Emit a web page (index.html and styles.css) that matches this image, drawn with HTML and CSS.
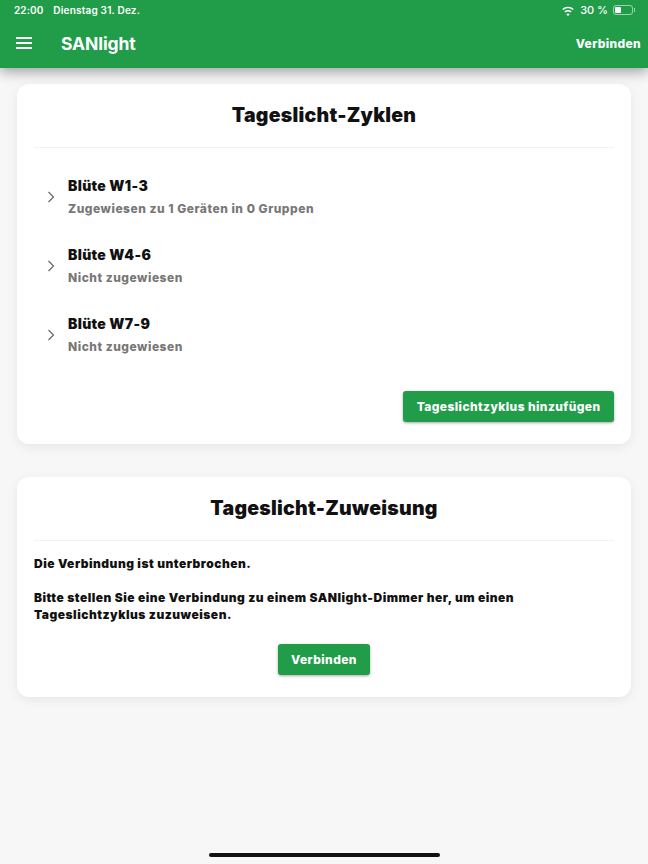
FILE: index.html
```html
<!DOCTYPE html>
<html lang="de">
<head>
<meta charset="utf-8">
<title>SANlight</title>
<link rel="stylesheet" href="styles.css">
</head>
<body>
<header class="appbar">
  <div class="status">
    <div class="status-left"><span class="time">22:00</span><span class="date">Dienstag 31. Dez.</span></div>
    <div class="status-right">
      <svg class="wifi" width="14" height="11" viewBox="0 0 14 11"><path d="M7 8.200 8.700 9.600 7 11 5.300 9.600Z M3.400 6.300C5.500 4.500 8.500 4.500 10.600 6.300L9.600 7.400C8 6.100 6 6.100 4.400 7.400Z M1.200 4C4.600 1 9.400 1 12.800 4L11.700 5.100C8.900 2.600 5.100 2.600 2.300 5.100Z" fill="#fff"/></svg>
      <span class="pct">30 %</span>
      <span class="battery"><span class="battery-fill"></span></span><span class="battery-tip"></span>
    </div>
  </div>
  <div class="toolbar">
    <button class="menu" aria-label="Menü"><span></span><span></span><span></span></button>
    <span class="brand">SANlight</span>
    <span class="connect">Verbinden</span>
  </div>
</header>
<main class="content">
  <section class="card">
    <h2 class="card-title">Tageslicht-Zyklen</h2>
    <ul class="cycles">
      <li class="cycle">
        <svg class="chev" width="8" height="12" viewBox="0 0 8 12"><path d="M1.500 1 6.500 6 1.500 11" fill="none" stroke="#666" stroke-width="1.200"/></svg>
        <div><div class="cycle-name">Blüte W1-3</div><div class="cycle-sub">Zugewiesen zu 1 Geräten in 0 Gruppen</div></div>
      </li>
      <li class="cycle">
        <svg class="chev" width="8" height="12" viewBox="0 0 8 12"><path d="M1.500 1 6.500 6 1.500 11" fill="none" stroke="#666" stroke-width="1.200"/></svg>
        <div><div class="cycle-name">Blüte W4-6</div><div class="cycle-sub">Nicht zugewiesen</div></div>
      </li>
      <li class="cycle">
        <svg class="chev" width="8" height="12" viewBox="0 0 8 12"><path d="M1.500 1 6.500 6 1.500 11" fill="none" stroke="#666" stroke-width="1.200"/></svg>
        <div><div class="cycle-name">Blüte W7-9</div><div class="cycle-sub">Nicht zugewiesen</div></div>
      </li>
    </ul>
    <div class="actions-end"><button class="btn">Tageslichtzyklus hinzufügen</button></div>
  </section>
  <section class="card card-assign">
    <h2 class="card-title">Tageslicht-Zuweisung</h2>
    <p class="msg msg-first">Die Verbindung ist unterbrochen.</p>
    <p class="msg msg-long">Bitte stellen Sie eine Verbindung zu einem SANlight-Dimmer her, um einen Tageslichtzyklus zuzuweisen.</p>
    <div class="actions-center"><button class="btn">Verbinden</button></div>
  </section>
</main>
<div class="home-indicator"></div>
</body>
</html>
```

FILE: styles.css
```css
* { box-sizing: border-box; }
html, body { height: 100%; }
body {
  margin: 0;
  height: 864px;
  overflow: hidden;
  background: #f7f7f7;
  color: #111;
  font-family: Inter, "Liberation Sans", sans-serif;
  display: flex;
  flex-direction: column;
  position: relative;
}
.appbar {
  height: 68px;
  flex: none;
  background: #219d4a;
  color: #fff;
  box-shadow: 0 4px 12px rgba(0,0,0,.35);
  position: relative;
  z-index: 1;
}
.status {
  height: 20px;
  padding: 0 13px 0 14px;
  display: flex;
  justify-content: space-between;
  align-items: center;
  font-size: 10px;
  font-weight: 600;
}
.status-left { display: flex; gap: 10px; letter-spacing: .2px; }
.time { letter-spacing: .1px; }
.status-right { display: flex; align-items: center; }
.wifi { margin-right: 5px; }
.pct { font-size: 11px; font-weight: 500; margin-right: 5px; }
.battery {
  width: 20px; height: 10px;
  border: 1px solid rgba(255,255,255,.55);
  border-radius: 3px;
  padding: 1px;
  display: block;
}
.battery-fill { display: block; width: 6px; height: 100%; background: #fff; border-radius: 1px; }
.battery-tip { width: 1px; height: 4px; margin-left: 1px; background: rgba(255,255,255,.55); }
.toolbar {
  height: 48px;
  padding: 0 7px 2px 16px;
  display: flex;
  align-items: center;
}
.menu {
  width: 16px; height: 11.500px;
  padding: 0; border: 0; background: none;
  display: flex; flex-direction: column; justify-content: space-between;
  margin-right: 29px;
}
.menu span { display: block; height: 1.500px; background: #fff; }
.brand { font-size: 17.500px; font-weight: 700; letter-spacing: -.1px; flex: 1; }
.connect { font-size: 12px; font-weight: 800; letter-spacing: .35px; }
.content {
  flex: 1;
  padding: 16px 17px 0;
  display: flex;
  flex-direction: column;
  gap: 33px;
}
.card {
  background: #fff;
  border-radius: 12px;
  padding: 0 17px;
  box-shadow: 0 3px 12px rgba(0,0,0,.07);
}
.card-title {
  margin: 0;
  height: 64px;
  padding-bottom: 2px;
  border-bottom: 1px solid #f3f3f3;
  display: flex;
  align-items: center;
  justify-content: center;
  font-size: 19.500px;
  font-weight: 900;
  letter-spacing: .25px;
}
.cycles { list-style: none; margin: 0; padding: 14px 0 0; }
.cycle {
  height: 69px;
  display: flex;
  align-items: center;
  padding-left: 13px;
  gap: 13px;
}
.chev { flex: none; }
.cycle-name { font-size: 14px; font-weight: 900; letter-spacing: .33px; line-height: 18px; margin-bottom: 6px; }
.cycle-sub { font-size: 12px; font-weight: 800; letter-spacing: .52px; color: #777; line-height: 16px; }
.actions-end { display: flex; justify-content: flex-end; padding: 22px 0 22px; }
.actions-center { display: flex; justify-content: center; padding: 20px 0 22px; }
.btn {
  height: 31px;
  padding: 0 13.500px;
  border: 0;
  border-radius: 3px;
  background: #219d4a;
  color: #fff;
  font-family: inherit;
  font-size: 12px;
  font-weight: 800;
  letter-spacing: .42px;
  box-shadow: 0 1px 3px rgba(0,0,0,.35);
}
.msg {
  margin: 0 0 16px;
  font-size: 12px;
  font-weight: 900;
  letter-spacing: .5px;
  line-height: 17.500px;
}
.msg:last-of-type { margin-bottom: 0; }
.msg-first { margin-top: 14px; }
.msg-long { max-width: 510px; }
.home-indicator {
  position: absolute;
  left: 209px; bottom: 7px;
  width: 231px; height: 4px;
  border-radius: 2px;
  background: #111;
}
```
